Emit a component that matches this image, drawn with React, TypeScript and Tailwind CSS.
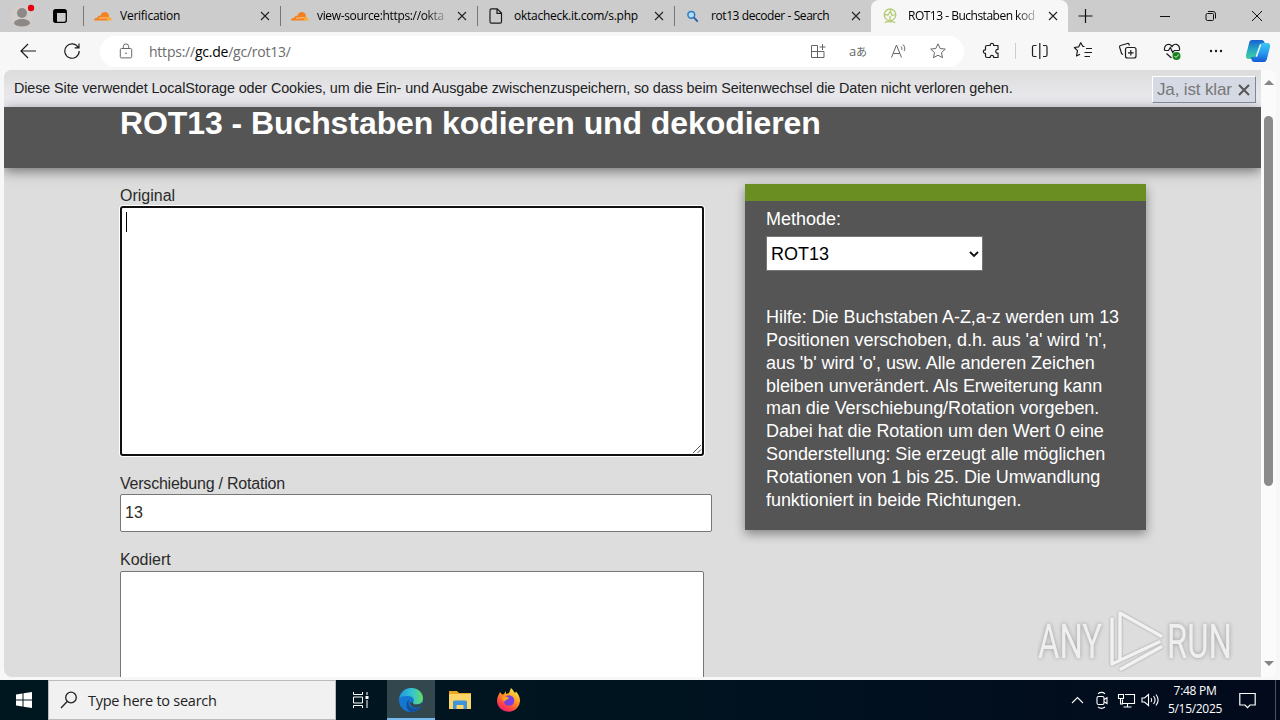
import type { ReactNode } from "react";
import clsx from "clsx";

type IconProps = {
  w?: number;
  h?: number;
  className?: string;
  children: ReactNode;
};

const Icon = ({ w = 16, h = 16, className, children }: IconProps) => (
  <svg
    width={w}
    height={h}
    viewBox={`0 0 ${w} ${h}`}
    fill="none"
    stroke="currentColor"
    className={clsx("shrink-0", className)}
  >
    {children}
  </svg>
);

const Cloud = () => (
  <Icon w={18}>
    <path d="M0 12.500c.2-2 1.500-2.800 3.300-2.600C3.800 8 5 7.400 6.200 7.900 7.500 5 9 4 10.800 4c2.400 0 3.800 1.600 4.200 4l-1 4.500z" fill="#f48120" stroke="none" />
    <path d="M12.500 12.500l1-3.700c2.600-.4 4 1.200 4.300 3.700z" fill="#faad3f" stroke="none" />
    <path d="M5 10.200l8-.5" stroke="#fbd3a5" strokeWidth=".8" />
  </Icon>
);

const FileIcon = () => (
  <Icon>
    <path d="M3.500.8h5.700l4.300 4.300v8.600a1.500 1.500 0 0 1-1.500 1.500H3.500A1.500 1.500 0 0 1 2 13.700V2.300A1.500 1.500 0 0 1 3.500.8zM9 1v4.400h4.400" stroke="#1b1b1b" strokeWidth="1.200" />
  </Icon>
);

const SearchFav = () => (
  <Icon>
    <circle cx="6.300" cy="6.800" r="3.400" stroke="#2d7cc4" strokeWidth="1.500" fill="#b5dcf7" />
    <path d="M9 9.700l3.200 3.300" stroke="#2a62a8" strokeWidth="1.800" strokeLinecap="round" />
  </Icon>
);

const GcFav = () => (
  <Icon>
    <g stroke="#b4cb74" strokeWidth="1.300">
      <circle cx="8" cy="6.800" r="5.800" />
      <path d="M2.500 6.500L6 7l2.500-4L10 7.500l3.500-1M8 8v4M3 14.800c1.500-2 3-1 5-1s3.500-1 5 1" />
    </g>
  </Icon>
);

const TabClose = () => (
  <Icon w={10} h={10}>
    <path d="M1 1l8 8M9 1L1 9" stroke="#222" strokeWidth="1.100" />
  </Icon>
);

type TabType = {
  title: string;
  icon: ReactNode;
  spacing: string;
  active?: boolean;
  fade?: boolean;
};

const tabs: TabType[] = [
  { title: "Verification", icon: <Cloud />, spacing: "tracking-[-0.25px]" },
  { title: "view-source:https://okta", icon: <Cloud />, spacing: "tracking-[-0.35px]", fade: true },
  { title: "oktacheck.it.com/s.php", icon: <FileIcon />, spacing: "tracking-[-0.25px]" },
  { title: "rot13 decoder - Search", icon: <SearchFav />, spacing: "tracking-[-0.42px]" },
  { title: "ROT13 - Buchstaben kod", icon: <GcFav />, spacing: "tracking-[-0.5px]", active: true, fade: true },
];

const Tab = ({ title, icon, spacing, active, fade }: TabType) => (
  <div
    className={clsx(
      "flex h-8 w-[197px] shrink-0 items-center",
      active && "rounded-t-lg bg-[#f7f7f7]"
    )}
  >
    <span className={clsx("h-5 w-px", !active && "bg-[#777]")} />
    <span className="ml-[10px] flex w-[26px] justify-start">{icon}</span>
    <span
      className={clsx(
        "w-[135px] overflow-hidden text-[12px] whitespace-nowrap text-black",
        spacing,
        fade && "[mask-image:linear-gradient(to_right,black_80%,transparent_99%)]"
      )}
    >
      {title}
    </span>
    <span className="ml-[5px]">
      <TabClose />
    </span>
  </div>
);

const TabBar = () => (
  <div className="flex h-8 items-center bg-[#cccccc]">
    <svg width="83" height="32" viewBox="0 0 83 32" className="shrink-0">
      <circle cx="22" cy="16" r="11" fill="#d1cecc" />
      <circle cx="22" cy="13" r="5" fill="#8d8986" />
      <path d="M14 23.500c0-3 3.500-4.500 8-4.500s8 1.500 8 4.500c-1 2-4.500 3-8 3s-7-1-8-3z" fill="#8d8986" />
      <circle cx="31" cy="8" r="3.200" fill="#e3000f" />
      <rect x="53.700" y="9.700" width="12.600" height="12.600" rx="2" fill="none" stroke="#000" strokeWidth="1.300" />
      <path d="M54 10h12v3H54zM54 12h3v10h-3z" fill="#000" />
    </svg>
    {tabs.map((tab) => (
      <Tab key={tab.title} {...tab} />
    ))}
    <svg width="212" height="32" viewBox="0 0 212 32" fill="none" stroke="#111" className="shrink-0">
      <path d="M17.500 9v14M10.500 16h14" strokeWidth="1.200" />
      <path d="M92 16.500h10" />
      <path d="M139.500 13.500h5a1 1 0 0 1 1 1v5a1 1 0 0 1-1 1h-5a1.500 1.500 0 0 1-1.500-1.500v-4a1.500 1.500 0 0 1 1.500-1.500zM140 11.500h5a2.500 2.500 0 0 1 2.500 2.500v4.500" />
      <path d="M184 11l10 10M194 11l-10 10" />
    </svg>
  </div>
);

const Toolbar = () => (
  <div className="flex h-[38px] items-center bg-[#f7f7f7] text-[#1b1b1b]">
    <div className="flex w-[100px] shrink-0 items-center gap-7 pl-5">
      <Icon>
        <path d="M16 8H1M8 1L1 8l7 7" strokeWidth="1.200" />
      </Icon>
      <Icon>
        <path d="M14.300 4.500A7.200 7.200 0 1 0 15.200 8M15 .5v4.300h-4.300" strokeWidth="1.200" />
      </Icon>
    </div>
    <div className="flex h-[31px] w-[864px] shrink-0 items-center rounded-full bg-white pl-[18px] text-[#666]">
      <Icon>
        <path d="M3.500 5.500h9a1.200 1.200 0 0 1 1.200 1.200v7a1.200 1.200 0 0 1-1.200 1.200h-9a1.200 1.200 0 0 1-1.200-1.200v-7a1.200 1.200 0 0 1 1.200-1.200zM5.300 5.500V3.600a2.700 2.700 0 0 1 5.400 0v1.900" />
        <circle cx="8" cy="10.300" r=".8" fill="#555" stroke="none" />
      </Icon>
      <p className="ml-[15px] w-[661px] text-[14px] tracking-[-0.23px] text-[#6b6b6b]">
        https://<span className="text-black">gc.de</span>/gc/rot13/
      </p>
      <Icon>
        <path d="M7.500 2.500H1.500v12h12.500V8.500H1.500M7.500 2.500v12M12.500 1v6M9.500 4h6" />
      </Icon>
      <span className="ml-[23px] w-[19px] text-[13px] leading-4 tracking-tight whitespace-nowrap">
        a<span className="font-['Noto_Sans_CJK_JP',sans-serif] text-[11px]">あ</span>
      </span>
      <Icon w={18} className="ml-[22px]">
        <path d="M1.500 14.500L6.500 2l5 12.500M3.300 10.500h6.500M11 3.500c1 1 1 2.300.7 3.400M13 1.500c2 2 2.200 4.500 1.200 6.500" />
      </Icon>
      <Icon className="ml-[22px]">
        <path d="M8 .8l2.200 4.700 5.100.6-3.800 3.500 1 5.100L8 12.200l-4.500 2.500 1-5.100L.7 6.100l5.100-.6z" strokeLinejoin="round" />
      </Icon>
    </div>
    <svg width="316" height="38" viewBox="0 0 316 38" fill="none" stroke="currentColor" strokeWidth="1.200" className="shrink-0">
      <path d="M23 13.500h3.200c-.3-3 3.800-3 3.500 0H34v4c-3-.5-3 4.200 0 3.700v4.300h-4.300c.3-2.800-3.800-2.800-3.500 0H23a1.500 1.500 0 0 1-1.500-1.500v-2.600c-2.800.3-2.800-3.900 0-3.600V15a1.500 1.500 0 0 1 1.500-1.500z" strokeLinejoin="round" />
      <path d="M51.500 11v16" stroke="#ccc" strokeWidth="1" />
      <path d="M72.500 13.500H70a1.500 1.500 0 0 0-1.500 1.500v8a1.500 1.500 0 0 0 1.500 1.500h2.500M79 13.500h2.500A1.500 1.500 0 0 1 83 15v8a1.500 1.500 0 0 1-1.500 1.500H79M75.800 11v16" />
      <path d="M121 14.500l-1.700-.2-2.100-3.600-2.100 4.200-4.300.6 3.200 3.200-1 5.300 3.500-1.800M122.500 16.500h6M121 20.500h7.500M121 24.500h5.500" transform="translate(-.5)" strokeLinejoin="round" />
      <rect x="161.500" y="15.500" width="10.500" height="10.500" rx="2" />
      <path d="M166.800 18v5.600M164 20.800h5.600M159 22.500l-1.400-.8-2-6.500c-.2-.8.200-1.500 1-1.700l6.800-2c.8-.2 1.500.2 1.700 1l.4 1" />
      <path d="M200.500 18.500c-.7-7 6.500-7.800 7.500-3.500 1.200-4.500 8.300-3.500 7.500 3.500M200.500 18.500h4l1.800-3 2.500 5 1.500-2h5M202.500 21.500l5 4.500" />
      <circle cx="212.500" cy="24" r="4" fill="#16821c" stroke="none" />
      <path d="M210.500 24l1.500 1.500 2.800-3" stroke="#fff" strokeWidth=".9" />
      <g fill="currentColor" stroke="none">
        <circle cx="247" cy="19" r="1.200" />
        <circle cx="252" cy="19" r="1.200" />
        <circle cx="257" cy="19" r="1.200" />
      </g>
      <g stroke="none">
        <path d="M288 8h9.500c1.800 0 2.600.9 3.100 2.700l.7 2.300H299c-2 0-3.200 1-3.900 3.200l-2.300 7.300c-.7 2.400-1.800 3.500-3.800 3.500h-4.200c-2.500 0-3.500-1.800-2.600-4.800l2.500-9.800C285.400 9.300 286 8 288 8z" fill="url(#copilotA)" />
        <path d="M300 30h-9.500c-1.800 0-2.600-.9-3.100-2.700l-.7-2.300h2.300c2 0 3.200-1 3.900-3.200l2.300-7.300c.7-2.400 1.800-3.500 3.800-3.500h4.200c2.500 0 3.500 1.800 2.600 4.800l-2.500 9.800c-.7 3.100-1.300 4.400-3.300 4.400z" fill="url(#copilotB)" />
        <path d="M291.500 24.500l4.500-12.800 1.200 1.300-4.200 12z" fill="#e9f8fb" />
      </g>
      <defs>
        <linearGradient id="copilotA" x1="0" y1="0" x2="0" y2="1">
          <stop stopColor="#1b5fd0" />
          <stop offset=".5" stopColor="#23a9c5" />
          <stop offset="1" stopColor="#45cf9a" />
        </linearGradient>
        <linearGradient id="copilotB" x1="0" y1="0" x2="0" y2="1">
          <stop stopColor="#38c8ef" />
          <stop offset=".5" stopColor="#2a9cf0" />
          <stop offset="1" stopColor="#1459d4" />
        </linearGradient>
      </defs>
    </svg>
  </div>
);

const helpLines = [
  "Hilfe: Die Buchstaben A-Z,a-z werden um 13",
  "Positionen verschoben, d.h. aus 'a' wird 'n',",
  "aus 'b' wird 'o', usw. Alle anderen Zeichen",
  "bleiben unverändert. Als Erweiterung kann",
  "man die Verschiebung/Rotation vorgeben.",
  "Dabei hat die Rotation um den Wert 0 eine",
  "Sonderstellung: Sie erzeugt alle möglichen",
  "Rotationen von 1 bis 25. Die Umwandlung",
  "funktioniert in beide Richtungen.",
];

const MethodPanel = () => (
  <aside className="h-[346px] w-[401px] border-t-[17px] border-[#6b8e23] bg-[#555] pl-[21px] text-[18px] text-white shadow-[0_4px_10px_rgba(0,0,0,0.4)]">
    <p className="pt-[7px] leading-[23px]">Methode:</p>
    <div className="mt-[5px] flex h-[35px] w-[217px] items-center justify-between border border-[#767676] bg-white pt-px pr-[3px] pl-1 text-black">
      <span>ROT13</span>
      <Icon w={10} h={10}>
        <path d="M1 3l4 4 4-4" strokeWidth="1.800" stroke="#111" />
      </Icon>
    </div>
    <div className="mt-[35px] leading-[22.850px] tracking-[-0.05px] whitespace-nowrap">
      {helpLines.map((line) => (
        <p key={line}>{line}</p>
      ))}
    </div>
  </aside>
);

const RotForm = () => (
  <div className="w-[592px] text-[16px] leading-[22px] text-[#2a2a2a]">
    <p className="pt-px leading-[21px]">Original</p>
    <div className="flex h-[250px] w-[584px] justify-between rounded-[3px] border-2 border-[#101010] bg-white shadow-[0_0_0_1px_#fff]">
      <span className="mt-1 ml-1 h-5 w-px bg-black" />
      <Icon w={10} h={10} className="self-end">
        <path d="M1 9l8-8M5.500 9L9 5.500" stroke="#555" />
      </Icon>
    </div>
    <p className="mt-[17px] leading-[21px] tracking-[-0.22px]">Verschiebung / Rotation</p>
    <div className="flex h-[38px] items-center rounded-[2px] border border-[#767676] bg-white pl-1">
      13
    </div>
    <p className="mt-[17px] mb-px">Kodiert</p>
    <div className="-mt-px h-[250px] w-[584px] rounded-[2px] border border-[#767676] bg-white" />
  </div>
);

const Watermark = () => (
  <svg width="200" height="66" viewBox="0 0 200 66" className="absolute right-[24px] bottom-[2px]">
    <g
      className="font-['Roboto',sans-serif] drop-shadow-[0_0_2px_rgba(0,0,0,0.3)]"
      fill="#efefef"
      fontSize="49"
      fontWeight="400"
    >
      <text x="1" y="49" textLength="64" lengthAdjust="spacingAndGlyphs">ANY</text>
      <text x="130" y="49" textLength="65" lengthAdjust="spacingAndGlyphs">RUN</text>
    </g>
    <g fill="none" stroke="#f2f2f2" strokeWidth="3.500" strokeLinecap="round" strokeLinejoin="round" className="drop-shadow-[0_0_1px_rgba(0,0,0,0.3)]">
      <path d="M75 10v45l47-22M83 50V4l41 23M84 60l40-22" />
    </g>
  </svg>
);

const Page = () => (
  <div className="flex h-[610px] bg-[#f7f7f7] pb-[3px] pl-1">
    <div className="relative h-[607px] w-[1257px] overflow-hidden rounded-l-lg bg-[#ddd] font-['Liberation_Sans',Arial,sans-serif]">
      <div className="flex h-[37px] items-center bg-linear-to-b from-[#dcdcdc] to-[#eeedf3] pl-[10px] text-[#222]">
        <p className="w-[1138px] text-[14.400px] tracking-[-0.12px] whitespace-nowrap">
          Diese Site verwendet LocalStorage oder Cookies, um die Ein- und Ausgabe zwischenzuspeichern, so dass beim Seitenwechsel die Daten nicht verloren gehen.
        </p>
        <div className="mt-[2px] flex h-[27px] w-[104px] items-center border border-[#7d8796] border-t-white border-l-white bg-[#d5d9e3] pl-1 text-[17px] text-[#777]">
          <span className="w-[75px] tracking-[-0.15px] whitespace-nowrap">Ja, ist klar</span>
          <Icon w={14} h={14} className="ml-[5px]">
            <path d="M2 2l10 10M12 2L2 12" stroke="#555" strokeWidth="2" />
          </Icon>
        </div>
      </div>
      <header className="h-[61px] bg-[#555] pl-[116px] shadow-[0_3px_12px_rgba(0,0,0,0.5)]">
        <h1 className="text-[32px] leading-8 font-bold tracking-[-0.08px] whitespace-nowrap text-white">
          ROT13 - Buchstaben kodieren und dekodieren
        </h1>
      </header>
      <main className="flex gap-[33px] pt-4 pl-[116px]">
        <RotForm />
        <MethodPanel />
      </main>
      <Watermark />
    </div>
    <div className="flex w-[15px] flex-col items-center rounded-r-lg bg-[#fbfbfb] pt-[9px] pb-[10px]">
      <Icon w={10} h={7}>
        <path d="M0 6l5-5 5 5z" fill="#858585" stroke="none" />
      </Icon>
      <div className="mt-[30px] h-[370px] w-[9px] rounded-full bg-[#8b8b8b]" />
      <Icon w={10} h={7} className="mt-auto">
        <path d="M0 1l5 5 5-5z" fill="#858585" stroke="none" />
      </Icon>
    </div>
  </div>
);

const Taskbar = () => (
  <div className="flex h-10 bg-linear-to-r from-[#00171f] via-[#001420] to-[#020a1c] text-white">
    <div className="flex w-12 items-center justify-center">
      <Icon>
        <path d="M0 2.500l6.500-1v6H0zM7.500 1.300L16 0v7.500H7.500zM0 8.500h6.500v6l-6.500-1zM7.500 8.500H16V16l-8.500-1.300z" fill="#fff" stroke="none" />
      </Icon>
    </div>
    <div className="flex w-72 items-center border border-[#bbb] bg-[#f1f1f1] pl-[11px] text-[#222]">
      <Icon w={18} h={18}>
        <circle cx="11" cy="6.500" r="5.300" strokeWidth="1.300" />
        <path d="M7.200 10.500L1 17" strokeWidth="1.300" />
      </Icon>
      <span className="mt-px ml-[10px] text-[14.500px] tracking-[-0.25px] whitespace-nowrap">Type here to search</span>
    </div>
    <div className="flex w-[51px] items-center justify-center pr-[3px]">
      <Icon w={17} h={16}>
        <path d="M1.500 0v2.500h9V0M1.500 5h9v6h-9zM1.500 16v-2.500h9V16M15 0v3M15 8v8" />
        <path d="M13.500 4h3v3h-3z" fill="#fff" stroke="none" />
      </Icon>
    </div>
    <div className="flex w-12 items-center justify-center border-b-2 border-[#76b9ed] bg-[#33474f]">
      <svg width="24" height="24" viewBox="0 0 24 24" className="mt-px">
        <defs>
          <linearGradient id="edgeTop" x1="0" x2="1">
            <stop stopColor="#2097dc" />
            <stop offset=".55" stopColor="#35c5cf" />
            <stop offset="1" stopColor="#66dc62" />
          </linearGradient>
        </defs>
        <circle cx="12" cy="12" r="12" fill="#1478d2" />
        <path d="M.3 10.500C1.500 4 6.500 0 12.300 0 19 0 24 4.800 24 10.300c0 4-3 6.200-6.200 6.200-3 0-4.600-1.200-3.500-2.600 1.500-2 .2-5.200-3.800-5.700C6 7.700 2 8.500.3 10.500z" fill="url(#edgeTop)" />
        <path d="M10.500 11.500c-3 5 1.500 9.500 6.500 9 2.200-.2 4.200-1.200 5.500-2.400-2 3.700-6 6.200-11 5.900C7 22.500 5.500 14 10.500 11.500z" fill="#10509f" />
        <path d="M14.300 13.900c-1 1.500.5 2.600 3.500 2.600 2 0 4-.8 5.200-2.200l.9 2-1.400 1.800c-6 4-11.500.5-11.800-3.600z" fill="#33474f" />
      </svg>
    </div>
    <div className="flex w-[49px] items-center justify-center">
      <svg width="22" height="20" viewBox="0 0 22 20">
        <path d="M0 1h8l2 2h12v16H0z" fill="#e9a824" />
        <path d="M0 4h22v15H0z" fill="#fbd568" />
        <path d="M4 19v-7a1.500 1.500 0 0 1 1.500-1.500h11A1.500 1.500 0 0 1 18 12v7h-3.500v-4h-7v4z" fill="#3e94d6" />
      </svg>
    </div>
    <div className="flex w-12 items-center justify-center">
      <svg width="23" height="24" viewBox="0 0 23 24">
        <defs>
          <linearGradient id="foxBody" x1=".8" y1="0" x2=".2" y2="1">
            <stop stopColor="#fff14f" />
            <stop offset=".4" stopColor="#ff9a1f" />
            <stop offset=".75" stopColor="#ff4045" />
            <stop offset="1" stopColor="#e31587" />
          </linearGradient>
        </defs>
        <path d="M3 4l2 2.500L7 6l2-3v3l3-1 2-5c2 1.500 2.500 3.500 4 5l1-1.500c2.300 2.500 4 5.500 4 9A11.500 11 0 0 1 0 13c0-3.500 1.500-6 3-9z" fill="url(#foxBody)" />
        <circle cx="12" cy="12.500" r="5.300" fill="#7a3fe0" />
        <path d="M5 9.500c2.500-1.500 5-1 7 .5-1 2-3.500 1.500-4.500 3.500-1.500-.5-2.500-2-2.500-4z" fill="#ffa31f" />
      </svg>
    </div>
    <svg width="104" height="40" viewBox="0 0 104 40" fill="none" stroke="#fff" strokeWidth="1.100" className="ml-auto shrink-0">
      <path d="M11 23l5.500-5.500L22 23" />
      <rect x="36" y="16.500" width="7" height="8" rx="1.500" />
      <path d="M43 19.500l3-1.800v5.800L43 21.700M37 13.700c2-1.500 5-1.500 7 0M37 27c2 1.500 5 1.500 7 0" />
      <path d="M64 14.500h9.500v9H61.500v-4M66.500 24v3M62.500 27h8M57.500 14.500h5v4h-5zM59.500 18.500v5.500h2.500" />
      <path d="M81 18h2.500l4-3.500v11l-4-3.500H81zM90 18c1 1.300 1 2.700 0 4M92.500 16c2 2.500 2 5.500 0 8M95 14.500c2.700 3.500 2.700 7.500 0 11" />
    </svg>
    <div className="flex w-[60px] flex-col items-center pt-[2px] text-[12px] leading-[18px] tracking-[-0.3px] whitespace-nowrap">
      <span>7:48 PM</span>
      <span>5/15/2025</span>
    </div>
    <div className="flex w-[51px] items-center border-r border-[#4a5260] pl-[14px]">
      <Icon w={17} h={17}>
        <path d="M.8 1.500h15.400v11.500H11l-2.500 2.700L6 13H.8z" strokeWidth="1.200" />
      </Icon>
    </div>
    <div className="w-1" />
  </div>
);

const App = () => (
  <div className="h-[720px] w-[1280px] overflow-hidden font-['Open_Sans',sans-serif]">
    <TabBar />
    <Toolbar />
    <Page />
    <Taskbar />
  </div>
);

export default App;
